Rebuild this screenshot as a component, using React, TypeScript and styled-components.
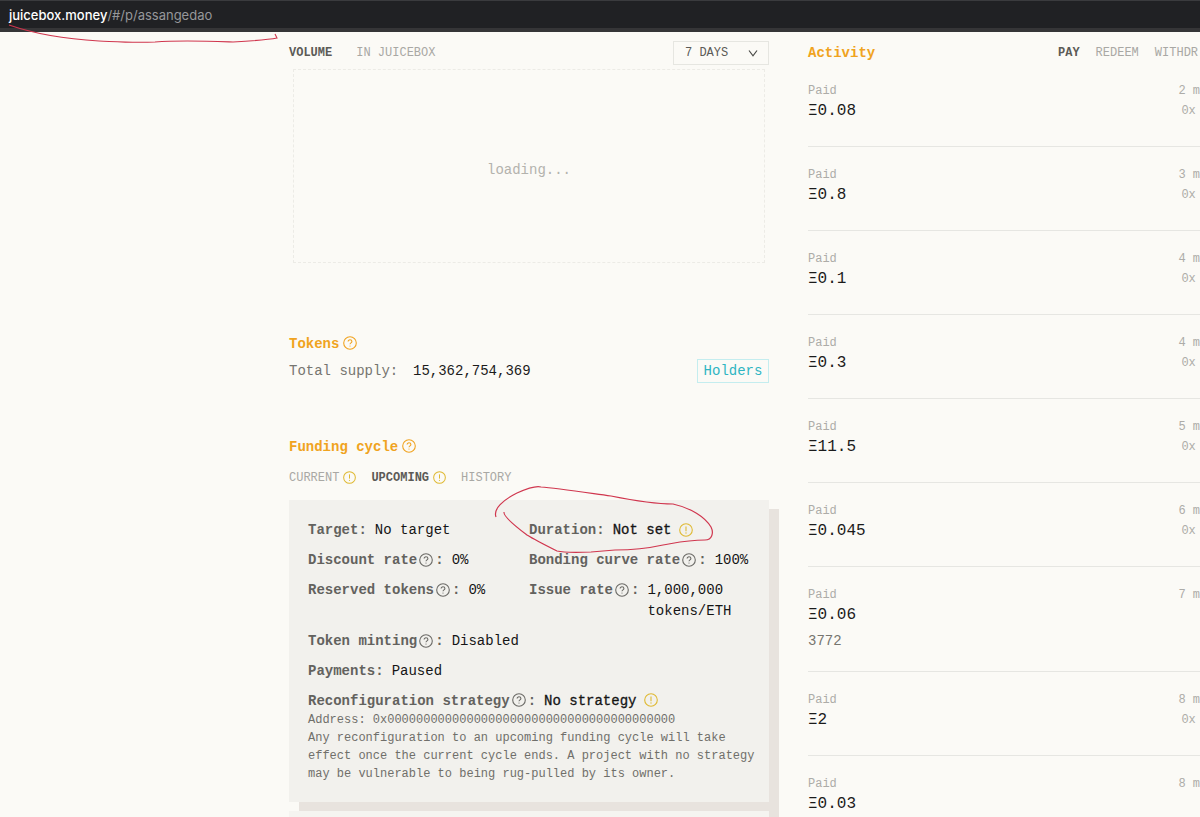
import React, { ReactNode } from "react";
import styled, { createGlobalStyle } from "styled-components";

const GlobalStyle = createGlobalStyle`
  * { box-sizing: border-box; }
  html { height: 100%; overflow: hidden; }
  body {
    margin: 0;
    height: 100%;
    overflow: hidden;
    background: #fbfaf6;
    color: #1b1b1b;
    font-family: "Liberation Mono", "DejaVu Sans Mono", monospace;
    font-size: 14px;
    line-height: 20px;
  }
  button, select { font-family: inherit; }
  h2, p, dl, dd, dt, ul { margin: 0; padding: 0; }
`;

const AddressBar = styled.header`
  position: relative;
  height: 32px;
  padding: 0 9px;
  display: flex;
  align-items: center;
  background: #202124;
  border-top: 1px solid #3a3b3e;
  border-bottom: 4px solid #353537;
  font-family: Inter, "Liberation Sans", sans-serif;
  font-size: 13px;
  color: #96979a;
`;

const Host = styled.span`
  color: #ffffff;
  font-weight: 500;
`;

const Underline = styled.svg`
  position: absolute;
  top: 19px;
  left: 5px;
  z-index: 1;
  pointer-events: none;
`;

const Page = styled.main`
  display: grid;
  grid-template-columns: 480px minmax(0, 1fr);
  column-gap: 39px;
  padding-left: 289px;
`;

const Column = styled.div`
  padding-top: 9px;
`;

const Bar = styled.div`
  display: flex;
  align-items: center;
  justify-content: space-between;
  height: 24px;
`;

const Tabs = styled.div<{ $gap: number }>`
  display: flex;
  align-items: center;
  gap: ${(p) => p.$gap}px;
`;

const Tab = styled.button<{ $active?: boolean }>`
  display: flex;
  align-items: center;
  gap: 4px;
  padding: 0;
  border: 0;
  background: none;
  font-size: 12px;
  line-height: 20px;
  white-space: nowrap;
  font-weight: ${(p) => (p.$active ? 700 : 400)};
  color: ${(p) => (p.$active ? "#5c5b57" : "#a9a8a4")};
`;

const SelectBox = styled.label`
  display: grid;
  align-items: center;
  width: 96px;
  height: 24px;
  border: 1px solid #e6e6e1;
  color: #4a4a47;

  > * { grid-area: 1 / 1; }
  svg { justify-self: end; margin-right: 10px; pointer-events: none; }
`;

const Select = styled.select`
  appearance: none;
  width: 100%;
  height: 22px;
  padding: 0 11px;
  border: 0;
  background: transparent;
  color: #5c5b57;
  font-size: 12px;
`;

const Chart = styled.div`
  display: flex;
  align-items: center;
  justify-content: center;
  height: 194px;
  margin: 4px 4px 71px;
  padding-top: 8px;
  border: 1px dashed #ecebe6;
  color: #b3b2ad;
`;

const Heading = styled.h2`
  display: flex;
  align-items: center;
  gap: 4px;
  font-size: 14px;
  line-height: 20px;
  font-weight: 700;
  color: #f0a320;
`;

const Supply = styled.div`
  display: flex;
  align-items: center;
  height: 24px;
  margin: 5px 0 54px;
  color: #1b1b1b;
`;

const SupplyLabel = styled.span`
  width: 124px;
  color: #76756f;
`;

const Holders = styled.button`
  width: 72px;
  height: 24px;
  margin-left: auto;
  padding: 0;
  border: 1px solid #c4edef;
  background: none;
  color: #2fb5c2;
  font-size: 14px;
  white-space: nowrap;
`;

const CycleTabs = styled(Tabs)`
  margin: 11px 0 12px;
`;

const Stack = styled.div`
  display: flex;
  flex-direction: column;
  gap: 9px;
`;

const Card = styled.section`
  position: relative;
  padding: 20px 12px 19px 19px;
  background: #f2f1ed;
  box-shadow: 10px 9px 0 #e8e3de;
`;

const NextCard = styled.section`
  position: relative;
  height: 24px;
  background: #f5f4f0;
  box-shadow: 10px 0 0 #e8e3de;
`;

const Facts = styled.dl`
  display: grid;
  grid-template-columns: 221px minmax(0, 1fr);
  row-gap: 9px;
`;

const Fact = styled.div<{ $wide?: boolean }>`
  display: flex;
  align-items: flex-start;
  gap: 8px;
  line-height: 21px;
  grid-column: ${(p) => (p.$wide ? "1 / -1" : "auto")};

  &:last-child { line-height: 20px; }
`;

const Term = styled.dt`
  display: flex;
  align-items: center;
  gap: 2px;
  white-space: nowrap;
  font-weight: 700;
  color: #63625e;
`;

const Value = styled.dd<{ $strong?: boolean }>`
  display: flex;
  align-items: center;
  gap: 8px;
  max-width: 100px;
  color: #151515;
  ${(p) => p.$strong && "max-width: none; -webkit-text-stroke: 0.3px #151515;"}
`;

const Note = styled.p`
  font-size: 12px;
  line-height: 18px;
  color: #706f6a;
`;

const Scribble = styled.svg`
  position: absolute;
  top: -15px;
  left: 202px;
  z-index: 1;
  pointer-events: none;
`;

const Feed = styled.ul`
  margin-top: -2px;
  list-style: none;
`;

const Entry = styled.li`
  display: flex;
  justify-content: space-between;
  min-height: 84px;
  padding: 18px 0 19px;
  border-bottom: 1px solid #e6e6e2;
`;

const Small = styled.div`
  font-size: 12px;
  line-height: 20px;
  color: #adaca8;
`;

const Amount = styled.div`
  font-size: 16px;
  line-height: 20px;
  color: #1b1b1b;
`;

const Memo = styled.div`
  margin-top: 6px;
  line-height: 21px;
  color: #76756f;
`;

const Meta = styled.div`
  flex: 0 0 18px;
  white-space: nowrap;
`;

const Payer = styled(Small)`
  padding-left: 3px;
`;

const ActivityTabs = styled(Tabs)`
  width: 142px;
`;

const RoundIcon = styled.svg`
  display: block;
  flex: none;
  margin-bottom: 2px;
`;

function Round({ kind, color = "#6b6a66", size = 14 }: { kind: "help" | "warn"; color?: string; size?: number }) {
  return (
    <RoundIcon width={size} height={size} viewBox="0 0 14 14" fill="none" stroke={color} strokeWidth="1.1">
      <circle cx="7" cy="7" r="6.3" />
      {kind === "help" ? (
        <>
          <path d="M5.1 5.6c0-1.1.8-1.8 1.9-1.8s1.9.7 1.9 1.7c0 1.3-1.9 1.4-1.9 2.8" />
          <circle cx="7" cy="10" r=".6" fill={color} stroke="none" />
        </>
      ) : (
        <>
          <path d="M7 3.6v4.6" />
          <circle cx="7" cy="10" r=".65" fill={color} stroke="none" />
        </>
      )}
    </RoundIcon>
  );
}

const WARN = "#dfb932";

function Row({ label, help, wide, strong, warn, children }: {
  label: string; help?: boolean; wide?: boolean; strong?: boolean; warn?: boolean; children: ReactNode;
}) {
  return (
    <Fact $wide={wide}>
      <Term>{label}{help && <Round kind="help" />}:</Term>
      <Value $strong={strong}>{children}{warn && <Round kind="warn" color={WARN} />}</Value>
    </Fact>
  );
}

const payments = [
  { amount: "0.08", time: "2 m", payer: "0x" },
  { amount: "0.8", time: "3 m", payer: "0x" },
  { amount: "0.1", time: "4 m", payer: "0x" },
  { amount: "0.3", time: "4 m", payer: "0x" },
  { amount: "11.5", time: "5 m", payer: "0x" },
  { amount: "0.045", time: "6 m", payer: "0x" },
  { amount: "0.06", time: "7 m", memo: "3772" },
  { amount: "2", time: "8 m", payer: "0x" },
  { amount: "0.03", time: "8 m" },
];

export default function App() {
  return (
    <>
      <GlobalStyle />
      <AddressBar>
        <Host>juicebox.money</Host>/#/p/assangedao
        <Underline width="276" height="26" viewBox="0 0 276 26" fill="none" stroke="#d0364e" strokeWidth="1.1">
          <path d="M4 5C30 14 60 19 94 21C116 22 128 23 150 22C176 20 200 21 228 22C246 21 262 20 272 18L270 14" />
        </Underline>
      </AddressBar>
      <Page>
        <Column>
          <Bar>
            <Tabs $gap={24}>
              <Tab $active>VOLUME</Tab>
              <Tab>IN JUICEBOX</Tab>
            </Tabs>
            <SelectBox>
              <Select aria-label="Period" defaultValue="7">
                <option value="7">7 DAYS</option>
                <option value="30">30 DAYS</option>
              </Select>
              <svg width="10" height="10" viewBox="0 0 10 10" fill="none" stroke="currentColor" strokeWidth="1.2">
                <path d="M1 2.5L5 7.8L9 2.5" />
              </svg>
            </SelectBox>
          </Bar>
          <Chart>loading...</Chart>

          <Heading>Tokens<Round kind="help" color="#f0a320" /></Heading>
          <Supply>
            <SupplyLabel>Total supply:</SupplyLabel>
            15,362,754,369
            <Holders>Holders</Holders>
          </Supply>

          <Heading>Funding cycle<Round kind="help" color="#f0a320" /></Heading>
          <CycleTabs $gap={15}>
            <Tab>CURRENT<Round kind="warn" color={WARN} size={13} /></Tab>
            <Tab $active>UPCOMING<Round kind="warn" color={WARN} size={13} /></Tab>
            <Tab>HISTORY</Tab>
          </CycleTabs>
          <Stack>
            <Card>
              <Facts>
                <Row label="Target">No target</Row>
                <Row label="Duration" strong warn>Not set</Row>
                <Row label="Discount rate" help>0%</Row>
                <Row label="Bonding curve rate" help>100%</Row>
                <Row label="Reserved tokens" help>0%</Row>
                <Row label="Issue rate" help>1,000,000 tokens/ETH</Row>
                <Row label="Token minting" help wide>Disabled</Row>
                <Row label="Payments" wide>Paused</Row>
                <Row label="Reconfiguration strategy" help wide strong warn>No strategy</Row>
              </Facts>
              <Note>Address: 0x0000000000000000000000000000000000000000</Note>
              <Note>
                Any reconfiguration to an upcoming funding cycle will take effect once the current
                cycle ends. A project with no strategy may be vulnerable to being rug-pulled by its owner.
              </Note>
              <Scribble width="224" height="70" viewBox="0 0 224 70" fill="none" stroke="#d0364e" strokeWidth="1.2">
                <path d="M5 32C2 24 12 15 26 8Q44 0 50 2C64 3 84 6 120 11C150 17 166 19 182 19C200 23 214 32 220 42C223 48 221 55 214 55C196 55 184 58 172 60C154 64 144 65 124 65L100 67Q74 68 66 66Q44 55 36 50Q12 32 13 27" />
              </Scribble>
            </Card>
            <NextCard />
          </Stack>
        </Column>

        <Column>
          <Bar>
            <Heading>Activity</Heading>
            <ActivityTabs $gap={16}>
              <Tab $active>PAY</Tab>
              <Tab>REDEEM</Tab>
              <Tab>WITHDR</Tab>
            </ActivityTabs>
          </Bar>
          <Feed>
            {payments.map((p, i) => (
              <Entry key={i}>
                <div>
                  <Small>Paid</Small>
                  <Amount>Ξ{p.amount}</Amount>
                  {p.memo && <Memo>{p.memo}</Memo>}
                </div>
                <Meta>
                  <Small>{p.time}</Small>
                  {p.payer && <Payer>{p.payer}</Payer>}
                </Meta>
              </Entry>
            ))}
          </Feed>
        </Column>
      </Page>
    </>
  );
}
